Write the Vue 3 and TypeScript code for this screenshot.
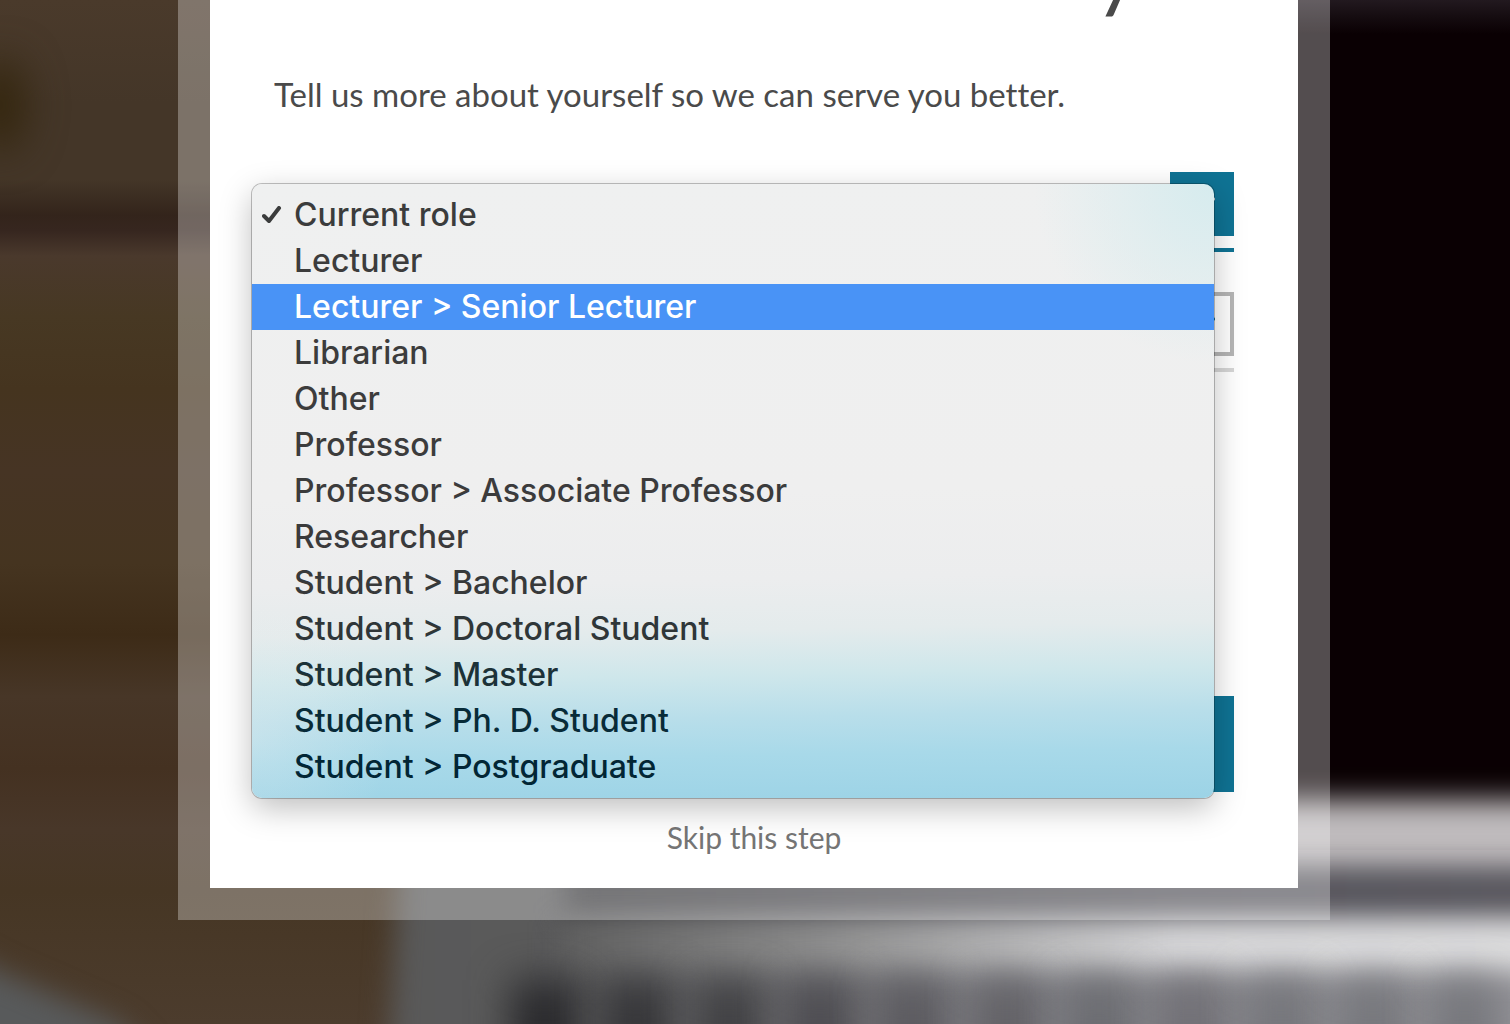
<script setup lang="ts">
import { ref } from 'vue'

interface RoleOption {
  label: string
  color: string
}

const roles: RoleOption[] = [
  { label: 'Current role', color: '#3b3c3c' },
  { label: 'Lecturer', color: '#3c3c3c' },
  { label: 'Lecturer > Senior Lecturer', color: '#3c3c3c' },
  { label: 'Librarian', color: '#3c3c3c' },
  { label: 'Other', color: '#3c3c3c' },
  { label: 'Professor', color: '#3c3c3c' },
  { label: 'Professor > Associate Professor', color: '#3b3b3c' },
  { label: 'Researcher', color: '#3a3a3b' },
  { label: 'Student > Bachelor', color: '#37393a' },
  { label: 'Student > Doctoral Student', color: '#2f3638' },
  { label: 'Student > Master', color: '#1c3238' },
  { label: 'Student > Ph. D. Student', color: '#082b38' },
  { label: 'Student > Postgraduate', color: '#022635' },
]

const selected = ref(0)
const highlighted = ref(2)

const keys = [
  { x: 545, fill: '#29292c' },
  { x: 637, fill: '#353538' },
  { x: 729, fill: '#404043' },
  { x: 820, fill: '#4d4c51' },
  { x: 912, fill: '#5b5a5f' },
  { x: 1007, fill: '#626166' },
  { x: 1099, fill: '#6b6c71' },
  { x: 1191, fill: '#717076' },
  { x: 1281, fill: '#75767b' },
  { x: 1373, fill: '#76777c' },
  { x: 1465, fill: '#76777c' },
]
</script>

<template>
  <div class="page">
    <svg class="backdrop" viewBox="0 0 1510 1024" preserveAspectRatio="none" aria-hidden="true">
      <defs>
        <linearGradient id="wood" x1="0" y1="0" x2="0" y2="1">
          <stop offset="0" stop-color="#4a3a2b" />
          <stop offset="0.1" stop-color="#443628" />
          <stop offset="0.175" stop-color="#443628" />
          <stop offset="0.21" stop-color="#33241b" />
          <stop offset="0.225" stop-color="#36261f" />
          <stop offset="0.25" stop-color="#4a392c" />
          <stop offset="0.31" stop-color="#473823" />
          <stop offset="0.38" stop-color="#45341f" />
          <stop offset="0.46" stop-color="#463424" />
          <stop offset="0.55" stop-color="#453420" />
          <stop offset="0.62" stop-color="#3d2b17" />
          <stop offset="0.68" stop-color="#473627" />
          <stop offset="0.75" stop-color="#443121" />
          <stop offset="0.81" stop-color="#483729" />
          <stop offset="0.87" stop-color="#463624" />
          <stop offset="1" stop-color="#4c3c2d" />
        </linearGradient>
        <linearGradient id="desk" x1="0" y1="0" x2="1" y2="0">
          <stop offset="0" stop-color="#595959" />
          <stop offset="0.16" stop-color="#5a5a5b" />
          <stop offset="0.5" stop-color="#808085" />
          <stop offset="1" stop-color="#98979c" />
        </linearGradient>
        <linearGradient id="ridge" x1="0" y1="0" x2="1" y2="0">
          <stop offset="0" stop-color="#606060" />
          <stop offset="0.25" stop-color="#8e8e8e" />
          <stop offset="0.6" stop-color="#dadadc" />
          <stop offset="1" stop-color="#dfdfe0" />
        </linearGradient>
        <linearGradient id="groove" x1="0" y1="0" x2="1" y2="0">
          <stop offset="0" stop-color="#39393c" />
          <stop offset="0.6" stop-color="#55545b" />
          <stop offset="1" stop-color="#5a585f" />
        </linearGradient>
        <linearGradient id="screen" x1="0" y1="0" x2="0" y2="1">
          <stop offset="0" stop-color="#22191f" />
          <stop offset="0.02" stop-color="#150c10" />
          <stop offset="0.04" stop-color="#0a0003" />
          <stop offset="1" stop-color="#0a0003" />
        </linearGradient>
        <filter
          id="soft"
          filterUnits="userSpaceOnUse"
          x="-120"
          y="-120"
          width="1800"
          height="1300"
          color-interpolation-filters="sRGB"
        >
          <feGaussianBlur stdDeviation="14" />
        </filter>
        <filter
          id="softer"
          filterUnits="userSpaceOnUse"
          x="-120"
          y="-120"
          width="1800"
          height="1300"
          color-interpolation-filters="sRGB"
        >
          <feGaussianBlur stdDeviation="20" />
        </filter>
      </defs>
      <rect width="1510" height="1024" fill="url(#wood)" />
      <ellipse cx="0" cy="105" rx="24" ry="46" fill="#33250c" filter="url(#softer)" />
      <path d="M-60 940 L0 972 L120 1024 L180 1090 L-60 1090 Z" fill="#585a5b" filter="url(#soft)" />
      <path d="M404 780 H1600 V1100 H386 Z" fill="url(#desk)" filter="url(#soft)" />
      <rect x="1240" y="0" width="340" height="850" fill="url(#screen)" />
      <rect x="1220" y="800" width="400" height="74" fill="#bfbbbd" filter="url(#soft)" />
      <rect x="566" y="868" width="1040" height="50" fill="url(#groove)" filter="url(#soft)" />
      <rect x="560" y="922" width="1040" height="50" fill="url(#ridge)" filter="url(#soft)" />
      <rect
        v-for="key in keys"
        :key="key.x"
        :x="key.x - 34"
        y="980"
        width="68"
        height="110"
        :fill="key.fill"
        filter="url(#softer)"
      />
    </svg>

    <main class="dialog">
      <h1 class="title">y</h1>
      <p class="intro">Tell us more about yourself so we can serve you better.</p>

      <form class="form" @submit.prevent>
        <div class="field active">
          <select v-model="selected" class="control" aria-label="Current role">
            <option v-for="(role, i) in roles" :key="role.label" :value="i">{{ role.label }}</option>
          </select>
          <span class="arrow">
            <svg viewBox="0 0 26 14" width="26" height="14"><path d="M2 2 L13 12 L24 2" /></svg>
          </span>
          <ul class="menu" role="listbox" aria-label="Current role">
            <li
              v-for="(role, i) in roles"
              :key="role.label"
              class="item"
              :class="{ highlighted: i === highlighted }"
              role="option"
              :aria-selected="i === selected"
              :style="{ color: i === highlighted ? '#ffffff' : role.color }"
              @mouseenter="highlighted = i"
              @click="selected = i"
            >
              <span class="mark">
                <svg v-if="i === selected" viewBox="0 0 20 18" width="20" height="18">
                  <path d="M2 10 L7 15 L17 2" />
                </svg>
              </span>
              <span>{{ role.label }}</span>
            </li>
          </ul>
        </div>
        <div class="field">
          <select class="control" aria-label="Subject area"></select>
          <span class="arrow">
            <svg viewBox="0 0 26 14" width="26" height="14"><path d="M2 2 L13 12 L24 2" /></svg>
          </span>
        </div>
        <button class="submit" type="submit" aria-label="Continue"></button>
      </form>

      <a class="skip" href="#">Skip this step</a>
    </main>
  </div>
</template>

<style>
body {
  margin: 0;
}
</style>

<style scoped>
.page {
  position: relative;
  box-sizing: border-box;
  min-height: 100vh;
  padding: 0 180px 104px 178px;
  overflow: hidden;
  background: #46372a;
}

.backdrop {
  position: absolute;
  inset: 0;
  width: 100%;
  height: 100%;
}

.dialog {
  position: relative;
  display: flex;
  flex-direction: column;
  padding: 0 64px 28px;
  border: 32px solid rgba(255, 255, 255, 0.3);
  border-top: 0;
  background: #ffffff;
  background-clip: padding-box;
  font-family: Lato, 'Open Sans', sans-serif;
  color: #4a4a4a;
}

.title {
  margin: -72px 96px 0 0;
  font-size: 84px;
  font-weight: 400;
  line-height: 84px;
  text-align: right;
}

.intro {
  margin: 58px 0 54px;
  font-size: 33px;
  font-variant-ligatures: none;
  line-height: 48px;
}

.form {
  display: flex;
  flex-direction: column;
  gap: 40px;
}

.field {
  position: relative;
  display: flex;
  padding-bottom: 12px;
  border-bottom: 4px solid #d6d6d6;
}

.field.active {
  z-index: 1;
  border-bottom-color: #0f7394;
}

.control {
  flex: 1;
  height: 64px;
  border: 0;
  background: transparent;
  appearance: none;
  font: inherit;
  font-size: 33px;
}

.arrow {
  display: flex;
  align-items: center;
  justify-content: center;
  box-sizing: border-box;
  width: 64px;
  height: 64px;
  border: 4px solid #b5b5b5;
  color: #0f7394;
}

.arrow svg path,
.mark svg path {
  fill: none;
  stroke: currentColor;
  stroke-width: 4;
  stroke-linecap: round;
  stroke-linejoin: round;
}

.active .arrow {
  border-color: #0f7394;
  background: #0f7394;
  color: #ffffff;
}

.menu {
  position: absolute;
  top: 12px;
  left: -22px;
  right: 20px;
  margin: 0;
  padding: 8px 0;
  border-radius: 10px;
  background:
    radial-gradient(circle at 100% 0, rgba(211, 235, 238, 0.9), rgba(211, 235, 238, 0) 180px),
    radial-gradient(circle at 0 90%, rgba(238, 240, 240, 0.3), rgba(238, 240, 240, 0) 140px),
    linear-gradient(
      179deg,
      #eff0f0 0%,
      #efefef 50%,
      #ecedee 64%,
      #e4ebec 72%,
      #cfe7eb 79%,
      #b8deea 86%,
      #a8d9e9 92%,
      #9cd3e6 100%
    );
  box-shadow:
    0 0 0 1px rgba(0, 0, 0, 0.24),
    0 10px 32px rgba(0, 0, 0, 0.26);
  font-family: Inter, 'Liberation Sans', sans-serif;
  font-size: 32px;
  font-weight: 500;
  line-height: 46px;
  list-style: none;
}

.item {
  display: flex;
  height: 46px;
  white-space: nowrap;
}

.item.highlighted {
  background: #4993f6;
}

.mark {
  display: flex;
  align-items: center;
  flex: none;
  box-sizing: border-box;
  width: 42px;
  padding-left: 10px;
}

.submit {
  height: 96px;
  margin-top: 284px;
  border: 0;
  background: #0f7394;
}

.skip {
  align-self: center;
  margin-top: 24px;
  padding-bottom: 2px;
  font-size: 30px;
  line-height: 42px;
  color: #757575;
  text-decoration: none;
}
</style>
